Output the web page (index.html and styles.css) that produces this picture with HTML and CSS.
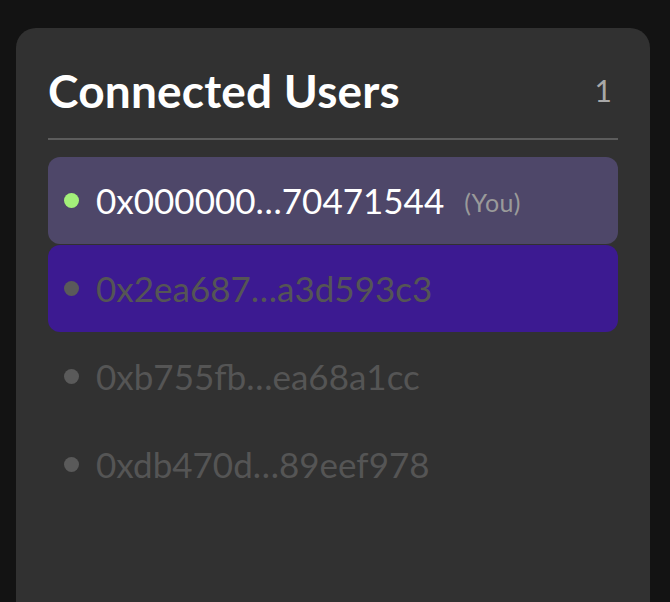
FILE: index.html
```html
<!DOCTYPE html>
<html>
<head>
<meta charset="utf-8">
<link rel="stylesheet" href="styles.css">
</head>
<body>
<div class="card">
  <div class="header">
    <h1 class="title">Connected Users</h1>
    <span class="count">1</span>
  </div>
  <ul class="users">
    <li class="user me"><span class="dot online"></span><span class="addr">0x000000…70471544</span><span class="you">(You)</span></li>
    <li class="user selected"><span class="dot"></span><span class="addr">0x2ea687…a3d593c3</span></li>
    <li class="user"><span class="dot"></span><span class="addr">0xb755fb…ea68a1cc</span></li>
    <li class="user"><span class="dot"></span><span class="addr">0xdb470d…89eef978</span></li>
  </ul>
</div>
</body>
</html>
```

FILE: styles.css
```css
html, body {
  margin: 0;
  padding: 0;
  background: #131313;
  height: 100%;
  overflow: hidden;
}
body {
  display: flex;
  flex-direction: column;
  padding: 28px 20px 0 16px;
  box-sizing: border-box;
  font-family: Lato, "Open Sans", sans-serif;
}
.card {
  flex: 1;
  background: #313131;
  border-radius: 20px 20px 0 0;
  padding: 35px 32px 0 32px;
  box-sizing: border-box;
}
.header {
  display: flex;
  align-items: center;
  justify-content: space-between;
  height: 54px;
  padding-bottom: 21px;
  border-bottom: 2px solid #5c5c5c;
}
.title {
  margin: 0;
  font-size: 46px;
  font-weight: 700;
  color: #ffffff;
  letter-spacing: 0.2px;
}
.count {
  font-size: 30px;
  color: #a8a8a8;
  padding-right: 6px;
}
.users {
  list-style: none;
  margin: 17px 0 0 0;
  padding: 0;
  display: flex;
  flex-direction: column;
  gap: 1px;
}
.user {
  display: flex;
  align-items: center;
  height: 87px;
  padding: 0 16px;
  border-radius: 12px;
  color: #555555;
  font-size: 35px;
}
.user.me {
  background: #4e4769;
  color: #ffffff;
}
.user.selected {
  background: #3c1a91;
}
.dot {
  width: 15px;
  height: 15px;
  border-radius: 50%;
  background: #5a5a5a;
  margin-right: 17px;
  flex: none;
}
.dot.online {
  background: #a3f07a;
}
.addr {
  margin-top: -2px;
}
.you {
  font-size: 25px;
  letter-spacing: 0.5px;
  color: #9a9a9a;
  margin-left: 20px;
  margin-top: 2px;
}
```
